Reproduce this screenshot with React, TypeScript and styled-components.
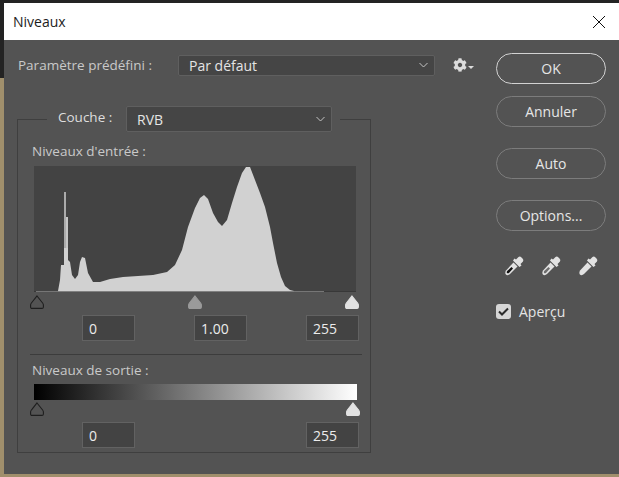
import React from 'react';
import styled, { createGlobalStyle } from 'styled-components';
import { FaCog } from 'react-icons/fa';

const GlobalStyle = createGlobalStyle`
  html, body {
    margin: 0;
    padding: 0;
    background: #8f8163;
  }
  * {
    box-sizing: border-box;
  }
`;

const Desktop = styled.div`
  width: 619px;
  height: 477px;
  padding: 3px 0 3px 4px;
  overflow: hidden;
  background: linear-gradient(#232323 78px, #a08f6c 78px);
  font-family: 'Open Sans', 'Noto Sans', sans-serif;
`;

const Dialog = styled.div`
  display: flex;
  flex-direction: column;
  height: 471px;
  background: #535353;
`;

const TitleBar = styled.div`
  display: flex;
  align-items: center;
  justify-content: space-between;
  flex: 0 0 37px;
  padding: 0 13px 0 9px;
  background: #ffffff;
  color: #1c1c1c;
  font-size: 14px;
`;

const Body = styled.div`
  display: flex;
  flex: 1;
  padding: 13px 0 0 13px;
`;

const LeftColumn = styled.div`
  flex: 0 0 479px;
  padding-top: 2px;
`;

const RightColumn = styled.div`
  display: flex;
  flex-direction: column;
  flex: 0 0 110px;
`;

const PresetRow = styled.div`
  display: flex;
  align-items: center;
  height: 20px;
  padding-left: 1px;
  margin-bottom: 31px;
`;

const Label = styled.div`
  color: #c9c9c9;
  font-size: 13.5px;
  line-height: 18px;
  white-space: nowrap;
`;

const PresetLabel = styled(Label)`
  flex: 0 0 160px;
`;

const Select = styled.div<{ $width: number; $height: number }>`
  display: flex;
  align-items: center;
  justify-content: space-between;
  width: ${({ $width }) => $width}px;
  height: ${({ $height }) => $height}px;
  padding: 0 6px 0 10px;
  background: #454545;
  border: 1px solid #5f5f5f;
  border-radius: 2px;
  color: #e4e4e4;
  font-size: 14px;
`;

const Chevron = styled.svg`
  flex: none;
  width: 9px;
  height: 6px;
  fill: none;
  stroke: #c4c4c4;
  stroke-width: 1;
`;

const GearButton = styled.div`
  display: flex;
  align-items: center;
  margin-left: 18px;
  color: #dcdcdc;
`;

const GearCaret = styled.span`
  width: 0;
  height: 0;
  margin: 5px 0 0 1px;
  border-left: 3px solid transparent;
  border-right: 3px solid transparent;
  border-top: 3px solid #dcdcdc;
`;

const GroupBox = styled.fieldset`
  width: 354px;
  height: 347px;
  min-width: 0;
  margin: 0;
  padding: 0 8px 0 12px;
  border: 1px solid #3f3f3f;
`;

const Legend = styled.legend`
  display: flex;
  align-items: flex-start;
  height: 26px;
  margin: 0 0 -8px 17px;
  padding: 0 8px 0 11px;
`;

const LegendLabel = styled(Label)`
  flex: 0 0 68px;
  height: 26px;
  line-height: 22px;
  color: #dedede;
`;

const SectionLabel = styled(Label)`
  padding-left: 2px;
`;

const InputLabel = styled(SectionLabel)`
  margin-top: 18px;
`;

const OutputLabel = styled(SectionLabel)`
  margin-top: 6px;
`;

const Histogram = styled.svg`
  display: block;
  width: 322px;
  height: 126px;
  margin: 6px 0 0 4px;
`;

const SliderRow = styled.div<{ $top: number; $width: number }>`
  display: flex;
  justify-content: space-between;
  width: ${({ $width }) => $width}px;
  height: 14px;
  margin-top: ${({ $top }) => $top}px;
`;

const Thumb = styled.svg`
  display: block;
  width: 14px;
  height: 14px;
`;

const FieldRow = styled.div<{ $top: number; $split?: boolean }>`
  display: flex;
  justify-content: ${({ $split }) => ($split ? 'space-between' : 'flex-start')};
  gap: 59px;
  width: 329px;
  margin-top: ${({ $top }) => $top}px;
  padding-left: 52px;
`;

const Field = styled.input`
  display: block;
  width: 53px;
  height: 26px;
  margin: 0;
  padding: 0 0 0 6px;
  background: #434343;
  border: 1px solid #626262;
  border-radius: 0;
  outline: none;
  color: #ececec;
  font-family: inherit;
  font-size: 14px;
`;

const Divider = styled.div`
  height: 1px;
  margin-top: 13px;
  background: #3c3c3c;
`;

const OutputRamp = styled.div`
  width: 323px;
  height: 16px;
  margin: 5px 0 0 4px;
  background: linear-gradient(90deg, #000000, #ffffff);
`;

const Button = styled.div<{ $primary?: boolean; $gap: number }>`
  display: flex;
  align-items: center;
  justify-content: center;
  height: 31px;
  margin-bottom: ${({ $gap }) => $gap}px;
  border: 1px solid ${({ $primary }) => ($primary ? '#d2d2d2' : '#7c7c7c')};
  border-radius: 16px;
  color: #e6e6e6;
  font-size: 14px;
`;

const DropperRow = styled.div`
  display: flex;
  gap: 15px;
  margin: 24px 0 0 7px;
`;

const PreviewRow = styled.div`
  display: flex;
  align-items: center;
  gap: 8px;
  margin-top: 25px;
  color: #e4e4e4;
  font-size: 14px;
`;

const CheckBox = styled.div`
  display: flex;
  align-items: center;
  justify-content: center;
  width: 15px;
  height: 15px;
  background: #d6d6d6;
  border-radius: 3px;
`;

// historique relevé sur la capture, en coordonnées de page
const histogramPoints = [
  [58, 291], [60, 280], [61, 265], [64, 265], [64, 248], [68, 248], [68, 260], [70, 262], [72, 275], [75, 279],
  [78, 275], [80, 262], [82, 257], [85, 258], [88, 273], [93, 282], [100, 282], [110, 279], [123, 277],
  [153, 275], [167, 272], [175, 265], [182, 250], [188, 227], [195, 208], [200, 198], [204, 195], [208, 199],
  [213, 213], [218, 222], [222, 226], [227, 220], [232, 203], [237, 187], [242, 173], [246, 167], [250, 167],
  [255, 180], [260, 193], [265, 207], [270, 227], [273, 243], [277, 263], [281, 277], [285, 286], [290, 290],
  [294, 291],
];

const histogramPath = `M58 292 ${histogramPoints.map(([x, y]) => `L${x} ${y}`).join(' ')} L294 292 Z`;

const HistogramChart = () => (
  <Histogram viewBox="34 166 322 126">
    <rect x="34" y="166" width="322" height="126" fill="#434343" />
    <rect x="36" y="291" width="288" height="1" fill="#bdbdbd" />
    <rect x="64" y="192" width="2" height="60" fill="#ababab" />
    <rect x="66" y="217" width="2" height="35" fill="#c6c6c6" />
    <path d={histogramPath} fill="#d1d1d1" />
    <rect x="34" y="291.5" width="322" height="0.5" fill="#2e2e2e" />
  </Histogram>
);

const SliderThumb = ({ fill }: { fill: string }) => (
  <Thumb viewBox="0 0 14 14">
    <path
      d="M7 1 L12.6 8 Q13.4 9 13.4 10 V12 Q13.4 13.4 12 13.4 H2 Q0.6 13.4 0.6 12 V10 Q0.6 9 1.4 8 Z"
      fill={fill}
      stroke={fill === 'none' ? '#1e1e1e' : fill}
      strokeWidth="1.1"
    />
  </Thumb>
);

const Eyedropper = ({ tip }: { tip: string }) => (
  <svg width="22" height="22" viewBox="0 0 22 22">
    <path d="M13 4.5 L15.5 2 Q17 1 18.5 2.5 L19.5 3.5 Q21 5 20 6.5 L17.5 9 L18.5 10.5 L16.5 12 L10 5.5 L11.5 3.5 Z" fill="#e2e2e2" />
    <path d="M10.5 7.5 L14.5 11.5 L7 19 Q5.5 20.5 3.5 20 L2.5 19 Q2 17 3 15.5 Z" fill="#e2e2e2" />
    <path d="M8.5 12 L10 13.5 L6.2 17.8 Q5 18.8 4 18 Q3.4 17 4.2 16 Z" fill={tip} />
  </svg>
);

const App = () => (
  <Desktop>
    <GlobalStyle />
    <Dialog>
      <TitleBar>
        <span>Niveaux</span>
        <svg width="14" height="14" viewBox="0 0 14 14">
          <path d="M1 1 L13 13 M13 1 L1 13" stroke="#111111" strokeWidth="1" fill="none" />
        </svg>
      </TitleBar>
      <Body>
        <LeftColumn>
          <PresetRow>
            <PresetLabel>Paramètre prédéfini :</PresetLabel>
            <Select $width={257} $height={21}>
              Par défaut
              <Chevron viewBox="0 0 9 6">
                <path d="M0.5 1 L4.5 5 L8.5 1" />
              </Chevron>
            </Select>
            <GearButton>
              <FaCog size={14} />
              <GearCaret />
            </GearButton>
          </PresetRow>
          <GroupBox>
            <Legend>
              <LegendLabel>Couche :</LegendLabel>
              <Select $width={206} $height={26}>
                RVB
                <Chevron viewBox="0 0 9 6">
                  <path d="M0.5 1 L4.5 5 L8.5 1" />
                </Chevron>
              </Select>
            </Legend>
            <InputLabel>Niveaux d'entrée :</InputLabel>
            <HistogramChart />
            <SliderRow $top={3} $width={329}>
              <SliderThumb fill="none" />
              <SliderThumb fill="#9a9a9a" />
              <SliderThumb fill="#e2e2e2" />
            </SliderRow>
            <FieldRow $top={6}>
              <Field readOnly value="0" />
              <Field readOnly value="1.00" />
              <Field readOnly value="255" />
            </FieldRow>
            <Divider />
            <OutputLabel>Niveaux de sortie :</OutputLabel>
            <OutputRamp />
            <SliderRow $top={2} $width={330}>
              <SliderThumb fill="none" />
              <SliderThumb fill="#e2e2e2" />
            </SliderRow>
            <FieldRow $top={6} $split>
              <Field readOnly value="0" />
              <Field readOnly value="255" />
            </FieldRow>
          </GroupBox>
        </LeftColumn>
        <RightColumn>
          <Button $primary $gap={12}>OK</Button>
          <Button $gap={21}>Annuler</Button>
          <Button $gap={21}>Auto</Button>
          <Button $gap={0}>Options...</Button>
          <DropperRow>
            <Eyedropper tip="#111111" />
            <Eyedropper tip="#6e6e6e" />
            <Eyedropper tip="#e2e2e2" />
          </DropperRow>
          <PreviewRow>
            <CheckBox>
              <svg width="11" height="9" viewBox="0 0 11 9">
                <path d="M1 4.5 L4 7.5 L10 1.5" stroke="#2b2b2b" strokeWidth="2" fill="none" />
              </svg>
            </CheckBox>
            Aperçu
          </PreviewRow>
        </RightColumn>
      </Body>
    </Dialog>
  </Desktop>
);

export default App;
